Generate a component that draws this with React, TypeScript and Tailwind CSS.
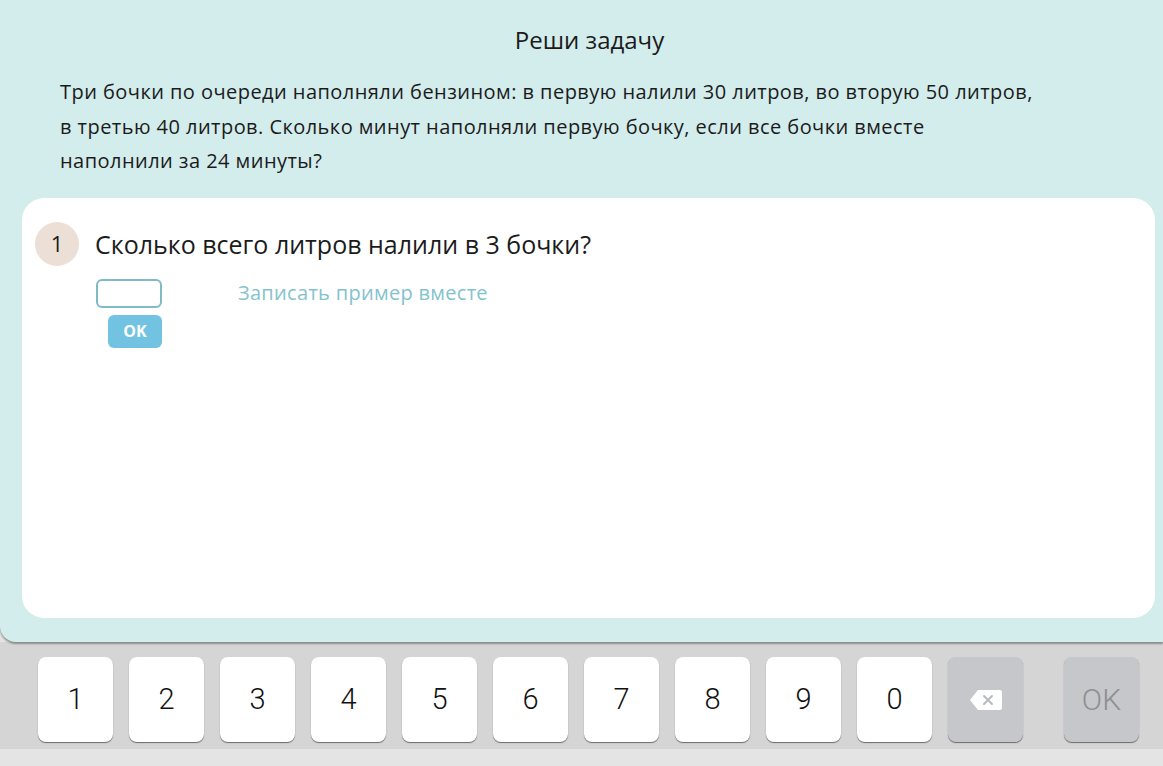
import type { ReactNode } from 'react';

const digits = ['1', '2', '3', '4', '5', '6', '7', '8', '9', '0'];

function Key({ children, dim }: { children: ReactNode; dim?: boolean }) {
  return (
    <div
      className={`w-[75px] h-[85px] rounded-[8px] flex items-center justify-center shadow-[0_1px_1px_rgba(0,0,0,0.5)] ${
        dim ? 'bg-[#c5c7cb]' : 'bg-white'
      }`}
    >
      {children}
    </div>
  );
}

export default function App() {
  return (
    <div className="w-[1163px] h-[766px] overflow-hidden bg-[#e4e4e4] flex flex-col font-['Open_Sans',sans-serif] text-[#1b1b1b]">
      {/* Task panel */}
      <div className="h-[642px] shrink-0 bg-[#d3ecec] rounded-bl-[16px] shadow-[0_2px_2px_rgba(0,0,0,0.35)] relative z-10 flex flex-col">
        <h1 className="pt-[24px] pl-[16px] text-center text-[24px] leading-[32px]">Реши задачу</h1>
        <p className="mt-[19px] pl-[60px] pr-[40px] text-[20px] leading-[34.5px] tracking-[0.45px]">
          Три бочки по очереди наполняли бензином: в первую налили 30 литров, во вторую 50 литров,
          <br />
          в третью 40 литров. Сколько минут наполняли первую бочку, если все бочки вместе
          <br />
          наполнили за 24 минуты?
        </p>

        {/* Question card */}
        <div className="mt-[19px] ml-[22px] mr-[8px] h-[420px] bg-white rounded-[22px] pt-[24px] pl-[13px]">
          <div className="flex items-center gap-[16px]">
            <div className="w-[44px] h-[44px] rounded-full bg-[#ecdfd5] flex items-center justify-center text-[22px]">
              1
            </div>
            <div className="text-[25px] leading-[32px]">Сколько всего литров налили в 3 бочки?</div>
          </div>
          <div className="flex ml-[61px] mt-[13px]">
            <div className="flex flex-col items-end">
              <div className="w-[66px] h-[29px] border-2 border-[#80bac7] rounded-[6px]" />
              <button className="mt-[7px] w-[54px] h-[33px] rounded-[6px] bg-[#72c2e2] text-white font-bold text-[16px]">
                OK
              </button>
            </div>
            <div className="ml-[76px] mt-[0px] text-[20px] leading-[28px] tracking-[0.3px] text-[#84c3cd]">
              Записать пример вместе
            </div>
          </div>
        </div>
      </div>

      {/* Keyboard */}
      <div className="h-[107px] shrink-0 bg-[#d5d5d5] flex items-start pt-[15px] pl-[38px] font-['Roboto',sans-serif] font-light">
        <div className="flex gap-[16px]">
          {digits.map((d) => (
            <Key key={d}>
              <span className="text-[29px] text-[#111]">{d}</span>
            </Key>
          ))}
          <Key dim>
            <svg width="34" height="22" viewBox="0 0 34 22">
              <path d="M9 1 H31 a2 2 0 0 1 2 2 V19 a2 2 0 0 1 -2 2 H9 L1 11 Z" fill="#fff" />
              <path d="M15 7 L23 15 M23 7 L15 15" stroke="#b8babe" strokeWidth="2" strokeLinecap="round" />
            </svg>
          </Key>
        </div>
        <div className="ml-[41px]">
          <Key dim>
            <span className="text-[30px] text-[#8e8f92]">OK</span>
          </Key>
        </div>
      </div>
      <div className="flex-1 bg-[#e4e4e4]" />
    </div>
  );
}
